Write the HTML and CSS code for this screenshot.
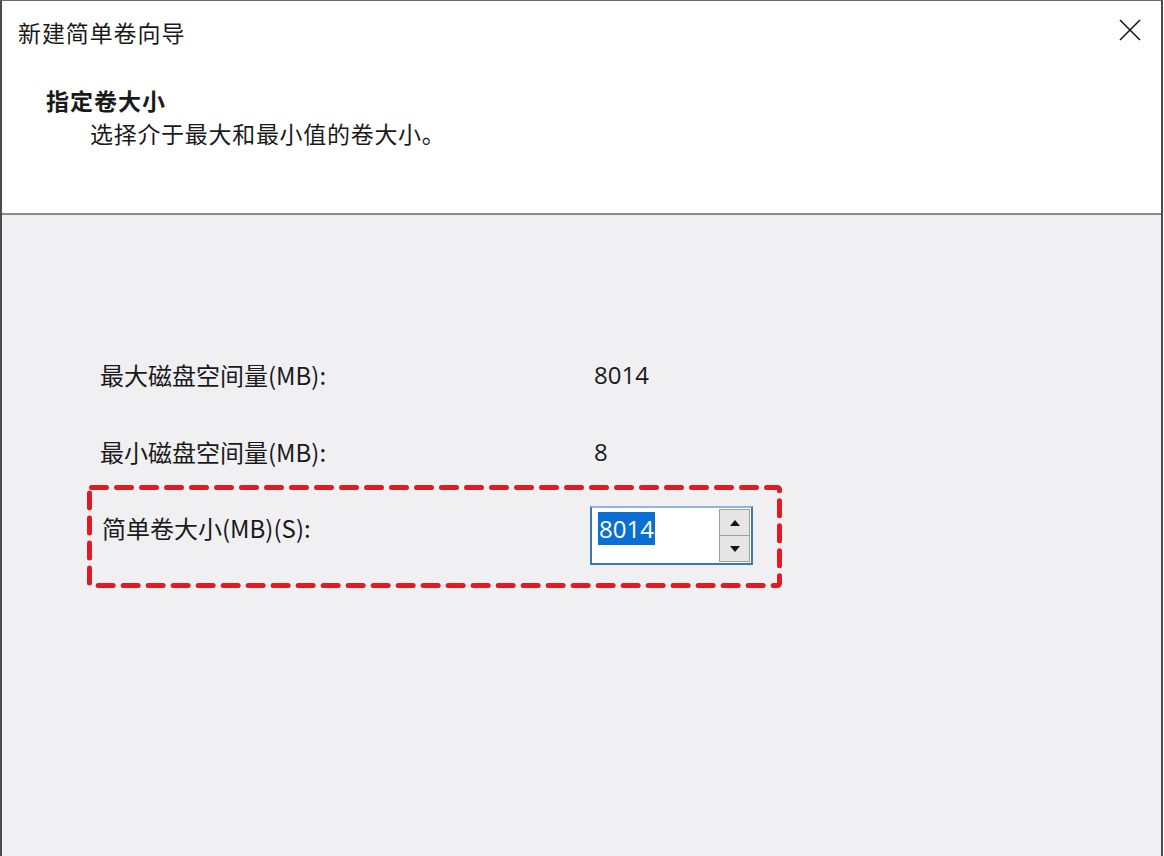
FILE: index.html
```html
<!DOCTYPE html>
<html lang="zh-CN">
<head>
<meta charset="utf-8">
<title>新建简单卷向导</title>
<link rel="stylesheet" href="styles.css">
</head>
<body>
<div class="window">
  <div class="header">
    <div class="titlebar">
      <span class="title">新建简单卷向导</span>
      <span class="close" aria-label="关闭">
        <svg width="22" height="22" viewBox="0 0 22 22"><path d="M1 1 L21 21 M21 1 L1 21" stroke="#1a1a1a" stroke-width="1.6" fill="none"/></svg>
      </span>
    </div>
    <div class="heading">指定卷大小</div>
    <div class="subheading">选择介于最大和最小值的卷大小。</div>
  </div>
  <div class="body">
    <div class="row">
      <span class="label">最大磁盘空间量(MB):</span>
      <span class="value">8014</span>
    </div>
    <div class="row row-last">
      <span class="label">最小磁盘空间量(MB):</span>
      <span class="value">8</span>
    </div>
    <div class="highlight">
      <svg class="dash" width="695" height="103" viewBox="0 0 695 103">
        <rect x="2.5" y="2.5" width="690" height="98" rx="2" fill="none" stroke="#e11b22" stroke-width="5" stroke-dasharray="15 10" stroke-linecap="round"/>
      </svg>
      <span class="label size-label">简单卷大小(MB)(S):</span>
      <div class="spin">
        <div class="field"><span class="sel">8014</span></div>
        <div class="buttons">
          <div class="btn"><span class="tri up"></span></div>
          <div class="btn"><span class="tri down"></span></div>
        </div>
      </div>
    </div>
  </div>
</div>
</body>
</html>
```

FILE: styles.css
```css
* { box-sizing: border-box; }
html, body { margin: 0; padding: 0; }
body {
  width: 1164px;
  height: 856px;
  overflow: hidden;
  background: #ffffff;
  font-family: "Noto Sans CJK SC", "Open Sans", sans-serif;
  color: #1a1a1a;
}
.window {
  width: 1163px;
  height: 856px;
  border-left: 2px solid #4a4a50;
  border-top: 1px solid #6a6a70;
  border-right: 2px solid #4a4a50;
  display: flex;
  flex-direction: column;
}
.header {
  height: 214px;
  background: #ffffff;
  border-bottom: 2px solid #8a8a8a;
  flex: none;
}
.titlebar {
  height: 62px;
  display: flex;
  align-items: center;
  justify-content: space-between;
  padding: 0 20px 0 16px;
}
.title {
  font-size: 23px;
  line-height: 1;
  letter-spacing: 0.9px;
}
.close { display: flex; margin-top: -4px; }
.heading {
  font-size: 23px;
  font-weight: bold;
  line-height: 1;
  padding-left: 44px;
  margin-top: 26px;
  letter-spacing: 1px;
}
.subheading {
  font-size: 23px;
  line-height: 1;
  padding-left: 88px;
  margin-top: 10px;
  letter-spacing: 0.7px;
}
.body {
  flex: 1;
  background: #f0f0f3;
  padding-top: 148px;
  padding-left: 98px;
}
.row {
  display: flex;
  align-items: center;
  height: 24px;
  margin-bottom: 53px;
}
.row-last { margin-bottom: 21px; }
.label {
  width: 494px;
  font-size: 24px;
  line-height: 1;
  flex: none;
}
.value {
  font-family: "Open Sans", sans-serif;
  font-size: 24px;
  line-height: 1;
}
.highlight {
  position: relative;
  margin-left: -13px;
  width: 695px;
  height: 103px;
  padding: 21px 0 0 15px;
  display: flex;
  align-items: flex-start;
}
.dash {
  position: absolute;
  left: 0;
  top: 0;
}
.size-label {
  margin-top: 10px;
  margin-right: -6px;
}
.spin {
  display: flex;
  width: 163px;
  height: 59px;
  border: 2px solid #3b79b6;
  border-top-color: #8fb6dc;
  background: #ffffff;
}
.field {
  flex: 1;
  padding: 4px 0 0 6px;
}
.sel {
  display: inline-block;
  background: #0a6fd4;
  color: #ffffff;
  font-family: "Open Sans", sans-serif;
  font-size: 24px;
  line-height: 33px;
  height: 33px;
  padding: 0 1px 0 1px;
}
.buttons {
  width: 31px;
  margin: 1px 1px 1px 0;
  display: flex;
  flex-direction: column;
  border: 1px solid #a0a0a0;
  background: #f0f0f0;
}
.btn {
  flex: 1;
  display: flex;
  align-items: center;
  justify-content: center;
  background: #e6e6e6;
}
.btn + .btn { border-top: 1px solid #a0a0a0; }
.tri {
  width: 0;
  height: 0;
  border-left: 5px solid transparent;
  border-right: 5px solid transparent;
}
.tri.up { border-bottom: 6px solid #111; }
.tri.down { border-top: 6px solid #111; }
```
